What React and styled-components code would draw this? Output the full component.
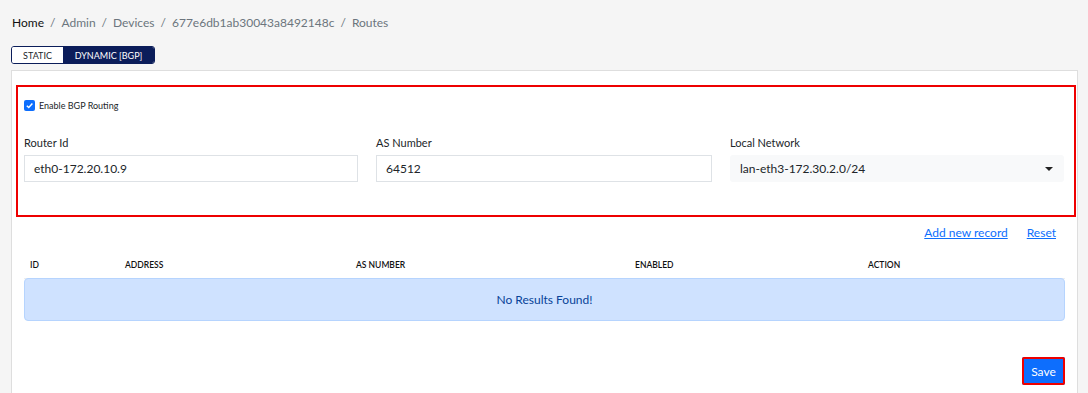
import React from "react";
import styled, { createGlobalStyle } from "styled-components";

const Global = createGlobalStyle`
  html, body { margin: 0; padding: 0; background: #f5f5f5; }
  body { font-family: Lato, "Open Sans", sans-serif; color: #212529; }
  * { box-sizing: border-box; }
`;

const Page = styled.div`
  padding: 12px 10px 0 11px;
  height: 393px;
  overflow: hidden;
`;

const Crumbs = styled.div`
  display: flex;
  align-items: center;
  gap: 6px;
  font-size: 12px;
  height: 20px;
  padding-left: 1px;
`;

const Crumb = styled.span`
  color: ${(p) => (p.$first ? "#111" : "#6c757d")};
`;

const Sep = styled.span`
  color: #6c757d;
`;

const Tabs = styled.div`
  display: inline-flex;
  margin-top: 14px;
  border: 1px solid #0b1d5a;
  border-radius: 3px;
  overflow: hidden;
  height: 18px;
`;

const Tab = styled.div`
  display: flex;
  align-items: center;
  justify-content: center;
  white-space: nowrap;
  font-size: 9px;
  width: ${(p) => p.$w}px;
  background: ${(p) => (p.$active ? "#0b1d5a" : "#fff")};
  color: ${(p) => (p.$active ? "#fff" : "#212529")};
`;

const Card = styled.div`
  margin-top: 6px;
  background: #fff;
  border: 1px solid #dedede;
  border-bottom: none;
  padding: 14px 1px 0 4px;
  height: 330px;
`;

const Highlight = styled.div`
  border: 2px solid #ee0000;
  padding: 11px 9px 33px 6px;
`;

const CheckRow = styled.label`
  display: flex;
  align-items: center;
  gap: 4px;
  font-size: 9px;
  color: #212529;
  height: 14px;
`;

const Box = styled.span`
  width: 11px;
  height: 11px;
  border-radius: 2px;
  background: #0d6efd;
  display: inline-flex;
  align-items: center;
  justify-content: center;
`;

const Fields = styled.div`
  display: grid;
  grid-template-columns: 334px 336px 334px;
  column-gap: 18px;
  margin-top: 24px;
`;

const Field = styled.div`
  display: flex;
  flex-direction: column;
  gap: 6px;
`;

const Label = styled.div`
  font-size: 11px;
  color: #212529;
  height: 13px;
  line-height: 13px;
`;

const Input = styled.div`
  height: 27px;
  border: 1px solid #dee2e6;
  padding: 0 9px;
  display: flex;
  align-items: center;
  font-size: 12px;
  color: #212529;
  background: #fff;
`;

const Select = styled.div`
  height: 27px;
  border-radius: 3px;
  background: #f8f9fa;
  padding: 0 11px 0 10px;
  display: flex;
  align-items: center;
  justify-content: space-between;
  font-size: 12px;
  color: #212529;
`;

const Caret = styled.span`
  width: 0;
  height: 0;
  border-left: 4px solid transparent;
  border-right: 4px solid transparent;
  border-top: 4px solid #222;
`;

const Body = styled.div`
  padding: 0 11px 0 8px;
`;

const Links = styled.div`
  display: flex;
  justify-content: flex-end;
  gap: 19px;
  margin-top: 7px;
  padding-right: 9px;
  height: 16px;
  align-items: center;
`;

const Link = styled.a`
  color: #0d6efd;
  font-size: 12px;
  text-decoration: underline;
  cursor: pointer;
`;

const HeadRow = styled.div`
  display: grid;
  grid-template-columns: 95px 231px 279px 233px 1fr;
  padding-left: 6px;
  margin-top: 12px;
  height: 27px;
  align-items: center;
  font-size: 8.5px;
  font-weight: 600;
  color: #111;
  border-bottom: 1px solid #eee;
`;

const Empty = styled.div`
  height: 43px;
  background: #cfe2ff;
  border: 1px solid #b6d4fe;
  border-radius: 4px;
  display: flex;
  align-items: center;
  justify-content: center;
  font-size: 12px;
  color: #084298;
  margin-top: -1px;
`;

const Footer = styled.div`
  display: flex;
  justify-content: flex-end;
  margin-top: 36px;
`;

const SaveBtn = styled.button`
  height: 28px;
  width: 43px;
  padding: 0;
  background: #0d6efd;
  color: #fff;
  border: none;
  outline: 2px solid #ee0000;
  outline-offset: -2px;
  border-radius: 2px;
  font-family: inherit;
  font-size: 12px;
`;

export default function App() {
  const crumbs = ["Home", "Admin", "Devices", "677e6db1ab30043a8492148c", "Routes"];
  return (
    <>
      <Global />
      <Page>
        <Crumbs>
          {crumbs.map((c, i) => (
            <React.Fragment key={c}>
              {i > 0 && <Sep>/</Sep>}
              <Crumb $first={i === 0}>{c}</Crumb>
            </React.Fragment>
          ))}
        </Crumbs>
        <Tabs>
          <Tab $w={51}>STATIC</Tab>
          <Tab $w={91} $active>
            DYNAMIC [BGP]
          </Tab>
        </Tabs>
        <Card>
          <Highlight>
            <CheckRow>
              <Box>
                <svg width="9" height="9" viewBox="0 0 10 10">
                  <path d="M2 5.2 L4.2 7.3 L8.2 2.8" stroke="#fff" strokeWidth="1.6" fill="none" />
                </svg>
              </Box>
              Enable BGP Routing
            </CheckRow>
            <Fields>
              <Field>
                <Label>Router Id</Label>
                <Input>eth0-172.20.10.9</Input>
              </Field>
              <Field>
                <Label>AS Number</Label>
                <Input>64512</Input>
              </Field>
              <Field>
                <Label>Local Network</Label>
                <Select>
                  lan-eth3-172.30.2.0/24
                  <Caret />
                </Select>
              </Field>
            </Fields>
          </Highlight>
          <Body>
            <Links>
              <Link>Add new record</Link>
              <Link>Reset</Link>
            </Links>
            <HeadRow>
              <div>ID</div>
              <div>ADDRESS</div>
              <div>AS NUMBER</div>
              <div>ENABLED</div>
              <div>ACTION</div>
            </HeadRow>
            <Empty>No Results Found!</Empty>
            <Footer>
              <SaveBtn>Save</SaveBtn>
            </Footer>
          </Body>
        </Card>
      </Page>
    </>
  );
}
